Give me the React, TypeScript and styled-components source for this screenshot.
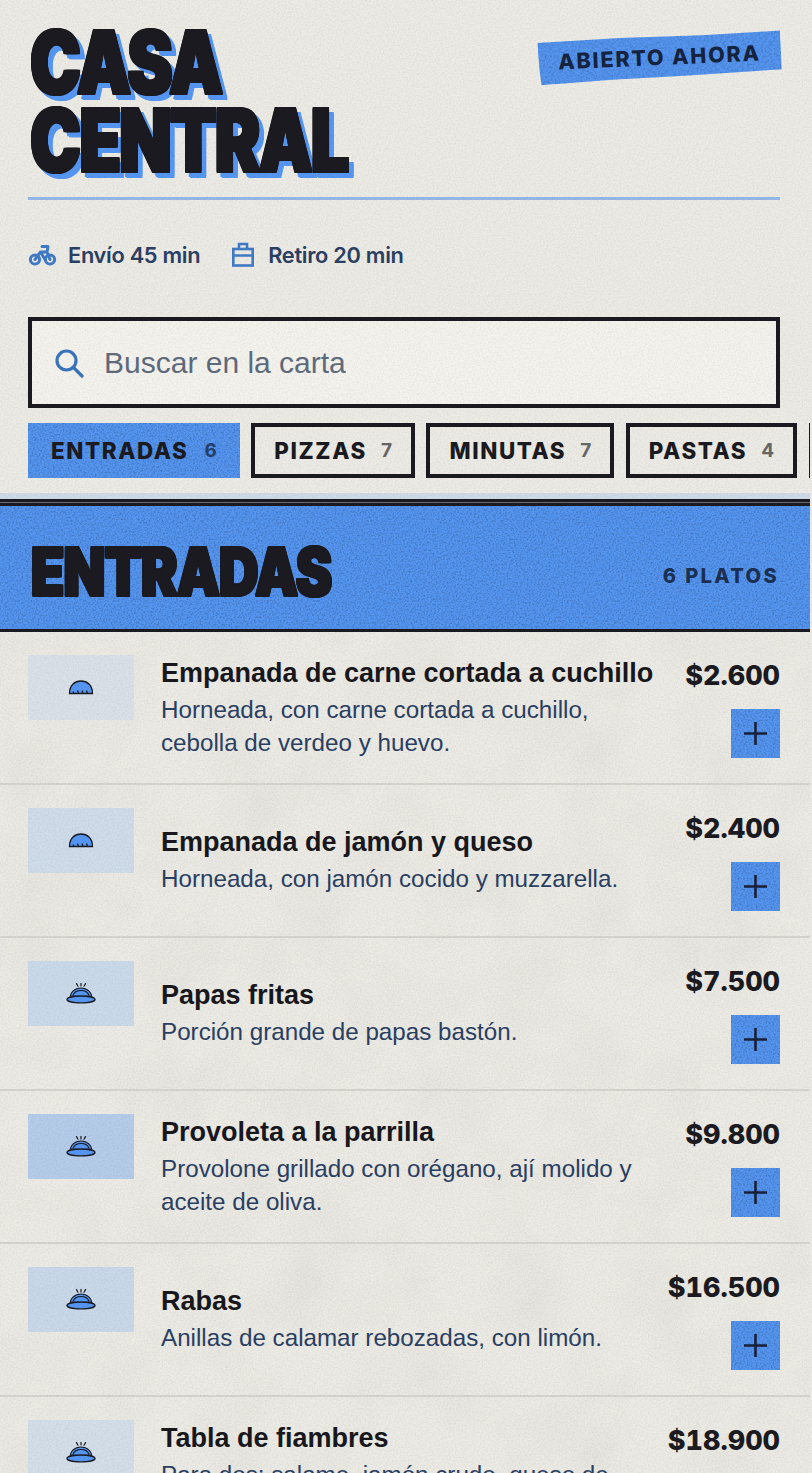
import React from "react";
import styled, { createGlobalStyle, css } from "styled-components";

const INK = "#1a1a20";
const BLUE = "#5597f4";
const NAVY = "#2a3f63";
const svgNoise = (freq: number, octaves: number, slope: number, intercept: number, size: number) =>
  `url("data:image/svg+xml,%3Csvg xmlns='http://www.w3.org/2000/svg' width='${size}' height='${size}'%3E%3Cfilter id='n'%3E%3CfeTurbulence type='fractalNoise' baseFrequency='${freq}' numOctaves='${octaves}' stitchTiles='stitch'/%3E%3CfeColorMatrix values='0 0 0 0 0 0 0 0 0 0 0 0 0 0 0 ${slope} 0 0 0 ${intercept}'/%3E%3C/filter%3E%3Crect width='100%25' height='100%25' filter='url(%23n)'/%3E%3C/svg%3E")`;

const inked = css`
  background-color: ${BLUE};
  background-image: ${svgNoise(0.55, 3, 0.5, -0.21, 300)};
`;

const Global = createGlobalStyle`
  html, body { margin: 0; padding: 0; height: 1473px; overflow: hidden; background: #ecebe5; }
  body { font-family: "Liberation Sans", Arial, sans-serif; color: ${INK}; }
  body::after {
    content: "";
    position: fixed;
    inset: 0;
    pointer-events: none;
    background-image: ${svgNoise(0.6, 3, 0.55, -0.2, 320)};
    opacity: 0.18;
    mix-blend-mode: multiply;
  }
  * { box-sizing: border-box; }
`;

const Page = styled.div`
  width: 810px;
  height: 1473px;
  overflow: hidden;
`;
const Header = styled.header`
  padding: 21px 30px 0 28px;
`;
const TopRow = styled.div`
  display: flex;
  justify-content: space-between;
  align-items: flex-start;
  border-bottom: 3px solid #94b9ea;
  height: 179px;
`;
const Title = styled.h1`
  margin: 2px 0 0;
  padding-left: 3px;
  font-family: "Inter", sans-serif;
  font-weight: 900;
  font-size: 88px;
  line-height: 78px;
  letter-spacing: -2px;
  transform: scaleX(0.77);
  transform-origin: left top;
  text-shadow:
    2px 0 0 ${INK}, -2px 0 0 ${INK}, 0 1px 0 ${INK}, 0 -1px 0 ${INK},
    2px 1px 0 ${INK}, -2px 1px 0 ${INK}, 2px -1px 0 ${INK}, -2px -1px 0 ${INK},
    8px 6px 0 ${BLUE}, 5px 6px 0 ${BLUE}, 8px 4px 0 ${BLUE}, 3px 5px 0 ${BLUE};
  white-space: nowrap;
`;
const Tape = styled.div`
  ${inked};
  margin: 14px -1px 0 0;
  padding: 0 20px;
  height: 45px;
  line-height: 45px;
  font-family: "Inter", sans-serif;
  font-weight: 800;
  font-size: 21.5px;
  letter-spacing: 1.8px;
  color: #15233f;
  transform: rotate(-2.5deg);
  white-space: nowrap;
  clip-path: polygon(0 6%, 34% 3%, 68% 5%, 100% 2%, 100.5% 88%, 60% 93%, 30% 95%, 1% 100%, 0.4% 60%);
`;
const Meta = styled.div`
  display: flex;
  align-items: center;
  height: 109px;
  font-family: "Inter", sans-serif;
  font-weight: 600;
  font-size: 21.8px;
  letter-spacing: -0.3px;
  color: ${NAVY};
`;
const MetaItem = styled.span<{ $gap: number }>`
  display: flex;
  align-items: center;
  gap: ${(p) => p.$gap}px;
  margin-right: 31px;
`;
const Search = styled.div`
  display: flex;
  align-items: center;
  height: 91px;
  margin-top: 8px;
  border: 4px solid ${INK};
  background: #f5f3ee;
  padding-left: 22px;
  gap: 20px;
  font-size: 30px;
  color: #5f6b7d;
`;
const Chips = styled.nav`
  display: flex;
  gap: 11.5px;
  margin: 15px -30px 0 0;
  overflow: hidden;
  height: 55px;
`;
const Chip = styled.div<{ $active?: boolean }>`
  ${(p) => (p.$active ? inked : "")};
  flex: none;
  display: flex;
  align-items: center;
  gap: ${(p) => (p.$active ? 16 : 14)}px;
  border: ${(p) => (p.$active ? "none" : `4px solid ${INK}`)};
  padding: 0 ${(p) => (p.$active ? 23 : 19)}px;
  font-family: "Inter", sans-serif;
  font-weight: 800;
  font-size: 22.4px;
  letter-spacing: 1.6px;
`;
const Count = styled.span<{ $active?: boolean }>`
  font-size: 19px;
  font-weight: 700;
  letter-spacing: 0;
  color: ${(p) => (p.$active ? "#24406d" : "#666")};
`;
const Band = styled.section`
  margin-top: 15px;
  border-top: 6px solid #cfdbe8;
  padding-top: 4px;
  height: 139px;
`;
const BandInner = styled.div`
  ${inked};
  height: 129px;
  border-top: 3px solid ${INK};
  border-bottom: 3px solid ${INK};
  box-shadow: 0 -1px 0 #6a6d76, 0 -4px 0 ${INK};
  display: flex;
  align-items: center;
  justify-content: space-between;
  padding: 0 31px 0 31px;
`;
const BandTitle = styled.h2`
  margin: 6px 0 0;
  font-family: "Inter", sans-serif;
  font-weight: 900;
  font-size: 68px;
  line-height: 1;
  letter-spacing: -1px;
  transform: scaleX(0.8);
  transform-origin: left center;
  text-shadow:
    1.6px 0 0 ${INK}, -1.6px 0 0 ${INK}, 0 1px 0 ${INK}, 0 -1px 0 ${INK},
    1.6px 1px 0 ${INK}, -1.6px 1px 0 ${INK}, 1.6px -1px 0 ${INK}, -1.6px -1px 0 ${INK};
  white-space: nowrap;
`;
const BandCount = styled.span`
  margin-top: 16px;
  font-family: "Inter", sans-serif;
  font-weight: 800;
  font-size: 20px;
  letter-spacing: 2.4px;
  color: #1b3052;
`;
const List = styled.div`
  background-image: ${svgNoise(0.014, 3, 1.1, -0.45, 700)};
`;
const Row = styled.article`
  display: flex;
  border-bottom: 2px solid #d6d5cf;
  padding: 23px 30px 0 28px;
  height: 153px;
  background: rgba(236, 235, 229, 0.95);
`;
const Thumb = styled.div<{ $tint: string }>`
  flex: none;
  width: 106px;
  height: 65px;
  background: ${(p) => p.$tint};
  display: flex;
  align-items: center;
  justify-content: center;
  margin-right: 27px;
`;
const Body = styled.div`
  flex: 1;
  min-width: 0;
  display: flex;
  flex-direction: column;
  justify-content: center;
  height: 104px;
`;
const Name = styled.h3`
  margin: 1px 0 3px;
  font-size: 27px;
  line-height: 33px;
  font-weight: 700;
  white-space: nowrap;
  color: #17171c;
`;
const Desc = styled.p`
  margin: 0;
  font-size: 24.2px;
  line-height: 33px;
  color: ${NAVY};
`;
const Side = styled.div`
  flex: none;
  display: flex;
  flex-direction: column;
  align-items: flex-end;
  gap: 14px;
`;
const Price = styled.div`
  font-family: "Inter", sans-serif;
  font-weight: 800;
  font-size: 27px;
  line-height: 38px;
  margin-top: 2px;
  font-variant-numeric: tabular-nums;
`;
const AddBtn = styled.div`
  ${inked};
  width: 49px;
  height: 49px;
  display: flex;
  align-items: center;
  justify-content: center;
`;

const Bike = () => (
  <svg width="29" height="22" viewBox="0 0 29 22" fill="none" stroke="#3f7bc6" strokeWidth="3" strokeLinecap="round" strokeLinejoin="round">
    <circle cx="7" cy="15.5" r="4.6" />
    <circle cx="22" cy="15.5" r="4.6" />
    <path d="M7 15.5 L12.5 8 H19 L22 15.5 M12.5 8 L17 15.5 M14 2.5 H20 L19 8" />
  </svg>
);
const Bag = () => (
  <svg width="24" height="25" viewBox="0 0 24 25" fill="none" stroke="#3f7bc6" strokeWidth="2.6">
    <rect x="2.3" y="7" width="19.4" height="16.5" />
    <path d="M2 13.5 H22 M8 7 V2 H16 V7" />
  </svg>
);
const SearchIcon = () => (
  <svg width="30" height="30" viewBox="0 0 30 30" fill="none" stroke="#3a74bd" strokeWidth="3.2" strokeLinecap="round">
    <circle cx="12.5" cy="12.5" r="9.5" />
    <path d="M19.5 19.5 L28 28" />
  </svg>
);
const PlusIcon = () => (
  <svg width="23" height="23" viewBox="0 0 23 23" stroke="#17203a" strokeWidth="2.6">
    <path d="M0 11.5 H23 M11.5 0 V23" />
  </svg>
);
const Empanada = () => (
  <svg width="26" height="15" viewBox="0 0 26 15">
    <path d="M1.5 13.5 C1.5 5 7 1 13 1 S24.5 5 24.5 13.5 Z" fill={BLUE} stroke={INK} strokeWidth="1.3" />
    <path d="M5 11.5 l1 2 M9.5 10.5 l1 3 M14 10.5 l1 3 M18.5 10.5 l1 3" stroke={INK} strokeWidth="1.2" />
  </svg>
);
const Cloche = () => (
  <svg width="30" height="21" viewBox="0 0 30 21" fill="none" stroke={INK} strokeWidth="1.2">
    <path d="M4 16 C4 9 9 5 15 5 S26 9 26 16 Z" fill={BLUE} />
    <path d="M7 12.5 C8 9.5 11.5 7.5 15 7.5 S22 9.5 23 12.5" />
    <path d="M4.5 13 H25.5" strokeWidth="0.8" />
    <ellipse cx="15" cy="16.5" rx="14" ry="3.3" fill={BLUE} strokeWidth="1.3" />
    <path d="M15 0.3 V3 M10.5 0.6 L12 3.2 M19.5 0.6 L18 3.2" strokeLinecap="round" />
  </svg>
);

const items = [
  { name: "Empanada de carne cortada a cuchillo", desc: ["Horneada, con carne cortada a cuchillo,", "cebolla de verdeo y huevo."], price: "$2.600", tint: "#dae1e9", Icon: Empanada },
  { name: "Empanada de jamón y queso", desc: ["Horneada, con jamón cocido y muzzarella."], price: "$2.400", tint: "#cfdcea", Icon: Empanada },
  { name: "Papas fritas", desc: ["Porción grande de papas bastón."], price: "$7.500", tint: "#cbdaea", Icon: Cloche },
  { name: "Provoleta a la parrilla", desc: ["Provolone grillado con orégano, ají molido y", "aceite de oliva."], price: "$9.800", tint: "#b5cdea", Icon: Cloche },
  { name: "Rabas", desc: ["Anillas de calamar rebozadas, con limón."], price: "$16.500", tint: "#c9d9e9", Icon: Cloche },
  { name: "Tabla de fiambres", desc: ["Para dos: salame, jamón crudo, queso de", "campo y aceitunas."], price: "$18.900", tint: "#d4dfea", Icon: Cloche },
];
const chips = [
  { label: "ENTRADAS", n: 6, active: true },
  { label: "PIZZAS", n: 7 },
  { label: "MINUTAS", n: 7 },
  { label: "PASTAS", n: 4 },
  { label: "POSTRES", n: 5 },
];

export default function App() {
  return (
    <Page>
      <Global />
      <Header>
        <TopRow>
          <Title>CASA<br />CENTRAL</Title>
          <Tape>ABIERTO AHORA</Tape>
        </TopRow>
        <Meta>
          <MetaItem $gap={11}><Bike />Envío 45 min</MetaItem>
          <MetaItem $gap={13}><Bag />Retiro 20 min</MetaItem>
        </Meta>
        <Search><SearchIcon />Buscar en la carta</Search>
        <Chips>
          {chips.map((c) => (
            <Chip key={c.label} $active={c.active}>
              {c.label}
              <Count $active={c.active}>{c.n}</Count>
            </Chip>
          ))}
        </Chips>
      </Header>
      <Band>
        <BandInner>
          <BandTitle>ENTRADAS</BandTitle>
          <BandCount>6 PLATOS</BandCount>
        </BandInner>
      </Band>
      <List>
        {items.map((it) => (
          <Row key={it.name}>
            <Thumb $tint={it.tint}><it.Icon /></Thumb>
            <Body>
              <Name>{it.name}</Name>
              <Desc>{it.desc.map((d, i) => <React.Fragment key={i}>{i > 0 && <br />}{d}</React.Fragment>)}</Desc>
            </Body>
            <Side>
              <Price>{it.price}</Price>
              <AddBtn><PlusIcon /></AddBtn>
            </Side>
          </Row>
        ))}
      </List>
    </Page>
  );
}
